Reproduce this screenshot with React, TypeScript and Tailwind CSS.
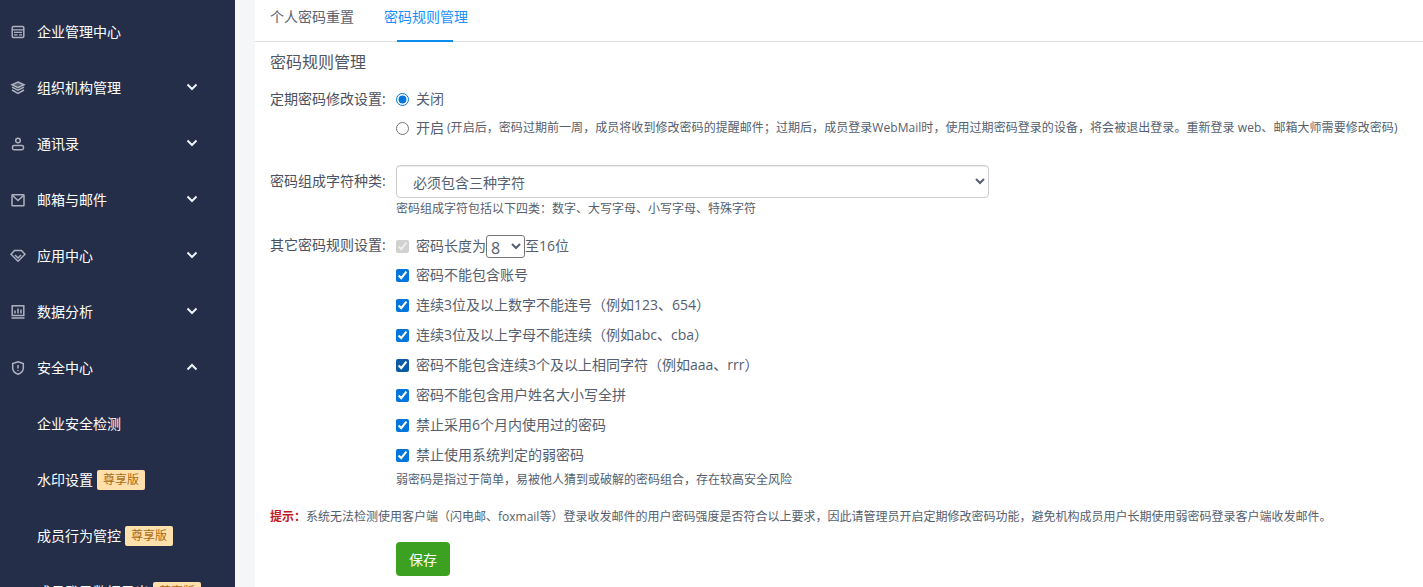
import { ReactNode } from "react";

const font = '"Open Sans", "Noto Sans CJK SC", sans-serif';

function Chevron({ up }: { up?: boolean }) {
  return (
    <svg width="12" height="8" viewBox="0 0 12 8" fill="none" stroke="#f0f2f7" strokeWidth="2" className="ml-auto mr-[37px] -mt-[3px]">
      <path d={up ? "M1.5 6.5 L6 2 L10.5 6.5" : "M1.5 1.5 L6 6 L10.5 1.5"} />
    </svg>
  );
}

const iconProps = { width: 16, height: 16, viewBox: "0 0 16 16", fill: "none", stroke: "#aeb2bf", strokeWidth: 1.5 };

const icons: Record<string, ReactNode> = {
  center: (
    <svg {...iconProps}>
      <rect x="2.2" y="2.5" width="11.6" height="11" rx="1.2" />
      <path d="M2 5.8 H14 M4 8.3 H12 M4 10.8 H7.5 M9 10.8 H12" strokeWidth="1.2" />
    </svg>
  ),
  layers: (
    <svg {...iconProps}>
      <path d="M8 2 L14 4.8 L8 7.6 L2 4.8 Z" fill="#aeb2bf" fillOpacity="0.35" />
      <path d="M2 7.2 L8 10.2 L14 7.2 M2 10 L8 13.4 L14 10" />
    </svg>
  ),
  user: (
    <svg {...iconProps}>
      <circle cx="8" cy="4.5" r="2.3" />
      <rect x="2.5" y="9.5" width="11" height="4.2" rx="1.6" />
    </svg>
  ),
  mail: (
    <svg {...iconProps}>
      <rect x="2" y="2.8" width="12" height="11" rx="0.6" />
      <path d="M2.5 3.5 L8 8.5 L13.5 3.5" />
    </svg>
  ),
  gem: (
    <svg {...iconProps}>
      <path d="M4.5 2.5 H11.5 L15 6.3 L8 13.3 L1 6.3 Z" />
      <path d="M5 7 L8 10 L11 7" />
    </svg>
  ),
  chart: (
    <svg {...iconProps}>
      <rect x="2.2" y="1.8" width="11.6" height="9.7" />
      <path d="M1.5 14 H14.5 M5 9.5 V6.5 M8 9.5 V4.5 M11 9.5 V5.5" />
    </svg>
  ),
  shield: (
    <svg {...iconProps}>
      <path d="M8 1.8 L13.3 3.6 V8 C13.3 11 10.8 13.2 8 14.2 C5.2 13.2 2.7 11 2.7 8 V3.6 Z" />
      <path d="M8 5 V8.5 M8 10 V11" />
    </svg>
  ),
};

function NavItem({ icon, label, arrow }: { icon: string; label: string; arrow?: "up" | "down" }) {
  return (
    <div className="flex h-[56px] items-center text-[14px] text-white">
      <span className="ml-[10px] mr-[11px] flex w-[16px] justify-center">{icons[icon]}</span>
      <span className="pb-[2px]">{label}</span>
      {arrow && <Chevron up={arrow === "up"} />}
    </div>
  );
}

function SubItem({ label, badge }: { label: string; badge?: boolean }) {
  return (
    <div className="flex h-[56px] items-center pl-[37px] text-[14px] text-white">
      <span className="pb-[2px]">{label}</span>
      {badge && (
        <span className="ml-[4px] flex h-[20px] items-center rounded-[2px] bg-[#ffe0ad] px-[6px] text-[12px] text-[#a86a12]">尊享版</span>
      )}
    </div>
  );
}

function Sidebar() {
  return (
    <aside className="h-[587px] w-[235px] shrink-0 overflow-hidden bg-[#242e49] pt-[4px]">
      <NavItem icon="center" label="企业管理中心" />
      <NavItem icon="layers" label="组织机构管理" arrow="down" />
      <NavItem icon="user" label="通讯录" arrow="down" />
      <NavItem icon="mail" label="邮箱与邮件" arrow="down" />
      <NavItem icon="gem" label="应用中心" arrow="down" />
      <NavItem icon="chart" label="数据分析" arrow="down" />
      <NavItem icon="shield" label="安全中心" arrow="up" />
      <SubItem label="企业安全检测" />
      <SubItem label="水印设置" badge />
      <SubItem label="成员行为管控" badge />
      <SubItem label="成员登录数据导出" badge />
    </aside>
  );
}

function Check({ label, dark, disabled, children }: { label?: string; dark?: boolean; disabled?: boolean; children?: ReactNode }) {
  return (
    <label className="flex h-[30px] items-center text-[14px] text-[#555e6e]">
      <input
        type="checkbox"
        defaultChecked
        disabled={disabled}
        className={dark ? "mr-[7px] h-[13px] w-[13px] accent-[#0b5aa5]" : "mr-[7px] h-[13px] w-[13px] accent-[#0075db]"}
      />
      {label && <span className="pb-[2px]">{label}</span>}
      {children}
    </label>
  );
}

function Rule({ label, labelClass, children }: { label?: string; labelClass?: string; children: ReactNode }) {
  return (
    <div className="flex">
      <div className={"w-[126px] shrink-0 whitespace-nowrap text-[14px] leading-[20px] text-[#4a5261] " + (labelClass ?? "")}>{label}</div>
      <div className="min-w-0 flex-1">{children}</div>
    </div>
  );
}

export default function App() {
  return (
    <div className="flex h-[587px] w-[1423px] overflow-hidden bg-white" style={{ fontFamily: font }}>
      <Sidebar />
      <div className="w-[20px] shrink-0 bg-[#f5f6f8]" />
      <main className="min-w-0 flex-1">
        <div className="flex h-[42px] items-start border-b border-[#dcdfe4] pl-[15px]">
          <div className="pt-[7px] text-[14px] leading-[20px] text-[#5b6270]">个人密码重置</div>
          <div className="relative ml-[30px] h-[41px] pt-[7px] text-[14px] leading-[20px] text-[#1790ff]">
            密码规则管理
            <span className="absolute -bottom-px left-[13px] h-[2px] w-[56px] bg-[#0a8cf0]" />
          </div>
        </div>

        <div className="pl-[15px]">
          <h2 className="mt-[10px] text-[16px] leading-[20px] font-normal text-[#4f5563]">密码规则管理</h2>

          <div className="mt-[17px]">
            <Rule label="定期密码修改设置:">
              <label className="flex h-[20px] items-center text-[14px] text-[#555e6e]">
                <input type="radio" name="expire" defaultChecked className="mr-[7px] h-[13px] w-[13px] accent-[#0075db]" />
                <span className="pb-[2px]">关闭</span>
              </label>
              <label className="mt-[9px] flex h-[20px] items-center whitespace-nowrap text-[14px] text-[#555e6e]">
                <input type="radio" name="expire" className="mr-[7px] h-[13px] w-[13px]" />
                <span className="pb-[2px]">开启</span>
                <span className="ml-[3px] text-[12px] tracking-[0.05px]">
                  (开启后，密码过期前一周，成员将收到修改密码的提醒邮件；过期后，成员登录WebMail时，使用过期密码登录的设备，将会被退出登录。重新登录 web、邮箱大师需要修改密码)
                </span>
              </label>
            </Rule>
          </div>

          <div className="mt-[27px]">
            <Rule label="密码组成字符种类:" labelClass="pt-[6px]">
              <select className="block h-[33px] w-[593px] rounded-[4px] border border-[#ccc] bg-white pt-[2px] pl-[12px] text-[14px] text-[#555e6e] shadow-[inset_0_1px_1px_rgba(0,0,0,0.075)]">
                <option>必须包含三种字符</option>
              </select>
              <p className="mt-[2px] text-[12px] leading-[18px] text-[#555e6e]">密码组成字符包括以下四类：数字、大写字母、小写字母、特殊字符</p>
            </Rule>
          </div>

          <div className="mt-[18px]">
            <Rule label="其它密码规则设置:" labelClass="-mt-px">
              <div className="-mt-[5px]">
                <div className="-mb-px">
                  <Check disabled>
                    <span className="pb-[2px]">密码长度为</span>
                    <select className="h-[23px] w-[39px] rounded-[3px] border border-[#767676] bg-white text-[16px] text-[#555e6e]">
                      <option>8</option>
                    </select>
                    <span className="pb-[2px]">至16位</span>
                  </Check>
                </div>
                <Check label="密码不能包含账号" />
                <Check label="连续3位及以上数字不能连号（例如123、654）" />
                <Check label="连续3位及以上字母不能连续（例如abc、cba）" />
                <Check dark label="密码不能包含连续3个及以上相同字符（例如aaa、rrr）" />
                <Check label="密码不能包含用户姓名大小写全拼" />
                <Check label="禁止采用6个月内使用过的密码" />
                <Check label="禁止使用系统判定的弱密码" />
                <p className="mt-px text-[12px] leading-[18px] text-[#555e6e]">弱密码是指过于简单，易被他人猜到或破解的密码组合，存在较高安全风险</p>
              </div>
            </Rule>
          </div>

          <p className="mt-[19px] whitespace-nowrap text-[12px] leading-[18px] text-[#555e6e]">
            <span className="font-bold text-[#c01c22]">提示：</span>系统无法检测使用客户端（闪电邮、foxmail等）登录收发邮件的用户密码强度是否符合以上要求，因此请管理员开启定期修改密码功能，避免机构成员用户长期使用弱密码登录客户端收发邮件。
          </p>

          <button className="mt-[16px] ml-[126px] h-[34px] w-[54px] rounded-[4px] bg-[#3ca021] text-[14px] text-white">保存</button>
        </div>
      </main>
    </div>
  );
}
